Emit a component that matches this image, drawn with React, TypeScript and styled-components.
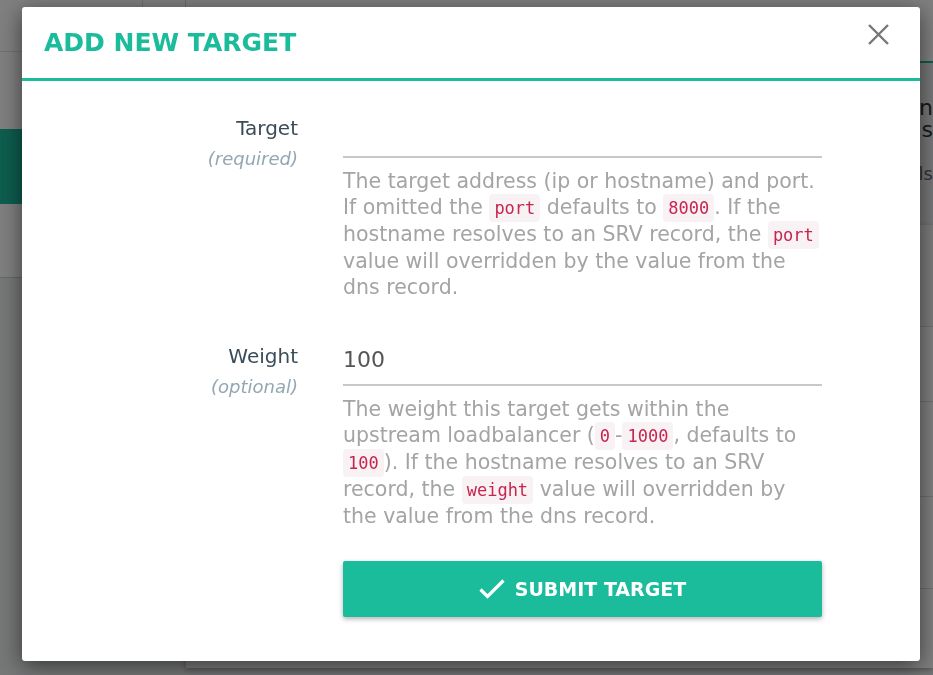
import React from "react";
import styled, { createGlobalStyle } from "styled-components";

const teal = "#1abc9c";

const GlobalStyle = createGlobalStyle`
  html, body { margin: 0; padding: 0; height: 100%; }
  body {
    font-family: "DejaVu Sans", "Liberation Sans", sans-serif;
    background: #eceeef;
    overflow: hidden;
  }
  * { box-sizing: border-box; }
`;

/* ---------- background page ---------- */
const Page = styled.div`
  display: flex;
  width: 933px;
  height: 675px;
`;

const Sidebar = styled.aside`
  width: 186px;
  flex: none;
  display: flex;
  flex-direction: column;
  align-self: flex-start;
  height: 278px;
  background: #fff;
  border-right: 1px solid #d6d6d6;
  border-bottom: 1px solid #cfcfcf;
`;

const Brand = styled.div`
  height: 52px;
  display: grid;
  grid-template-columns: 143px 1fr;
  border-bottom: 1px solid #e4e4e4;
`;

const BrandCell = styled.div`
  border-right: 1px solid #dcdcdc;
`;

const NavList = styled.nav`
  display: flex;
  flex-direction: column;
  padding-top: 2px;
`;

const NavItem = styled.div<{ $active?: boolean }>`
  height: 75px;
  background: ${(p) => (p.$active ? teal : "transparent")};
  color: ${(p) => (p.$active ? "#fff" : "#555")};
  font-size: 16px;
  display: flex;
  align-items: center;
  padding-left: 24px;
`;

const Main = styled.main`
  flex: 1;
  display: flex;
  flex-direction: column;
  min-width: 0;
`;

const TopBar = styled.header`
  height: 63px;
  flex: none;
  background: #fff;
  border-bottom: 2px solid ${teal};
`;

const Intro = styled.div`
  padding: 34px 0 0 30px;
  height: 162px;
  color: #333;
`;

const IntroTitle = styled.div`
  font-size: 22px;
  line-height: 22px;
  white-space: nowrap;
  text-align: right;
`;

const IntroNote = styled.div`
  margin-top: 22px;
  font-size: 18px;
  color: #666;
  text-align: right;
  white-space: nowrap;
`;

const Card = styled.section`
  background: #fff;
  height: 443px;
  box-shadow: 0 2px 6px rgba(0, 0, 0, 0.3);
  display: flex;
  flex-direction: column;
`;

const CardToolbar = styled.div`
  height: 102px;
  background: #f7f7f7;
  border-bottom: 1px solid #ddd;
`;

const TableRow = styled.div<{ $h: number }>`
  height: ${(p) => p.$h}px;
  display: grid;
  grid-template-columns: 1fr 44px;
  align-items: center;
  border-bottom: 1px solid #ddd;
  color: #777;
  font-size: 20px;
`;

const Cell = styled.div``;

/* ---------- modal ---------- */
const Overlay = styled.div`
  position: fixed;
  inset: 0;
  background: rgba(0, 0, 0, 0.5);
`;

const Modal = styled.div`
  position: fixed;
  top: 7px;
  left: 22px;
  width: 898px;
  background: #fff;
  border-radius: 3px;
  box-shadow: 0 5px 22px rgba(0, 0, 0, 0.55);
  display: flex;
  flex-direction: column;
`;

const Header = styled.div`
  height: 74px;
  border-bottom: 3px solid ${teal};
  display: flex;
  align-items: center;
  justify-content: space-between;
  padding: 0 31px 0 22px;
`;

const Title = styled.h2`
  margin: 0;
  font-size: 25px;
  font-weight: bold;
  color: ${teal};
`;

const CloseButton = styled.button`
  align-self: flex-start;
  margin-top: 17px;
  width: 21px;
  height: 21px;
  padding: 0;
  border: 0;
  background: none;
  cursor: pointer;
  display: flex;
`;

const Form = styled.form`
  display: flex;
  flex-direction: column;
  padding: 34px 0 44px;
`;

const Row = styled.div<{ $gap?: number }>`
  display: grid;
  grid-template-columns: 276px 479px;
  column-gap: 45px;
  margin-bottom: ${(p) => p.$gap ?? 0}px;
`;

const LabelCol = styled.div`
  text-align: right;
  display: flex;
  flex-direction: column;
`;

const Label = styled.label`
  font-size: 20px;
  line-height: 26px;
  color: #3b4c58;
`;

const Hint = styled.span`
  margin-top: 5px;
  font-size: 18px;
  line-height: 26px;
  font-style: italic;
  color: #93a7b3;
`;

const FieldCol = styled.div`
  display: flex;
  flex-direction: column;
`;

const Input = styled.input`
  height: 43px;
  width: 100%;
  border: 0;
  border-bottom: 2px solid #c8c8c8;
  padding: 0 0 8px 0;
  font-family: inherit;
  font-size: 22px;
  color: #555;
  background: transparent;
  outline: none;
`;

const Help = styled.p`
  margin: 10px 0 0;
  font-size: 20.5px;
  line-height: 26px;
  color: #a4a4a4;
`;

const Code = styled.code`
  font-family: "DejaVu Sans Mono", "Liberation Mono", monospace;
  font-size: 17px;
  padding: 4px 5px;
  border-radius: 4px;
  background: #f9f2f4;
  color: #c7254e;
`;

const SubmitButton = styled.button`
  height: 56px;
  width: 100%;
  border: 0;
  border-radius: 2px;
  background: ${teal};
  color: #fff;
  font-family: inherit;
  font-size: 19px;
  font-weight: bold;
  display: flex;
  align-items: center;
  justify-content: center;
  gap: 10px;
  box-shadow: 0 2px 5px rgba(0, 0, 0, 0.3);
  cursor: pointer;
`;

export default function App() {
  return (
    <>
      <GlobalStyle />
      <Page>
        <Sidebar>
          <Brand>
            <BrandCell />
            <div />
          </Brand>
          <NavList>
            <NavItem>Info</NavItem>
            <NavItem $active>Targets</NavItem>
          </NavList>
        </Sidebar>
        <Main>
          <TopBar />
          <Intro>
            <IntroTitle>Targets of the upstream loadbalancer can</IntroTitle>
            <IntroTitle>be added, listed or deleted through this</IntroTitle>
            <IntroNote>Click a target to see its details</IntroNote>
          </Intro>
          <Card>
            <CardToolbar />
            <TableRow $h={75}>
              <Cell />
              <Cell>
                <svg width="16" height="10" viewBox="0 0 16 10">
                  <polyline points="2,8 8,2 14,8" fill="none" stroke="#222" strokeWidth="2.5" />
                </svg>
              </Cell>
            </TableRow>
            <TableRow $h={95}>
              <Cell />
              <Cell>3</Cell>
            </TableRow>
            <TableRow $h={92}>
              <Cell />
              <Cell>3</Cell>
            </TableRow>
          </Card>
        </Main>
      </Page>

      <Overlay />
      <Modal role="dialog">
        <Header>
          <Title>ADD NEW TARGET</Title>
          <CloseButton type="button" aria-label="Close">
            <svg width="21" height="21" viewBox="0 0 21 21">
              <path d="M1 1 L20 20 M20 1 L1 20" stroke="#777" strokeWidth="2.4" fill="none" />
            </svg>
          </CloseButton>
        </Header>
        <Form onSubmit={(e) => e.preventDefault()}>
          <Row $gap={43}>
            <LabelCol>
              <Label>Target</Label>
              <Hint>(required)</Hint>
            </LabelCol>
            <FieldCol>
              <Input type="text" defaultValue="" />
              <Help>
                The target address (ip or hostname) and port. If omitted the <Code>port</Code> defaults to{" "}
                <Code>8000</Code>. If the hostname resolves to an SRV record, the <Code>port</Code> value will
                overridden by the value from the dns record.
              </Help>
            </FieldCol>
          </Row>
          <Row $gap={32}>
            <LabelCol>
              <Label>Weight</Label>
              <Hint>(optional)</Hint>
            </LabelCol>
            <FieldCol>
              <Input type="text" defaultValue="100" />
              <Help>
                The weight this target gets within the upstream loadbalancer (<Code>0</Code>-<Code>1000</Code>,
                defaults to <Code>100</Code>). If the hostname resolves to an SRV record, the <Code>weight</Code>{" "}
                value will overridden by the value from the dns record.
              </Help>
            </FieldCol>
          </Row>
          <Row>
            <div />
            <SubmitButton type="submit">
              <svg width="26" height="20" viewBox="0 0 26 20">
                <polyline points="1.5,10.5 8.5,17.5 24.5,1.5" fill="none" stroke="#fff" strokeWidth="3.2" />
              </svg>
              SUBMIT TARGET
            </SubmitButton>
          </Row>
        </Form>
      </Modal>
    </>
  );
}
